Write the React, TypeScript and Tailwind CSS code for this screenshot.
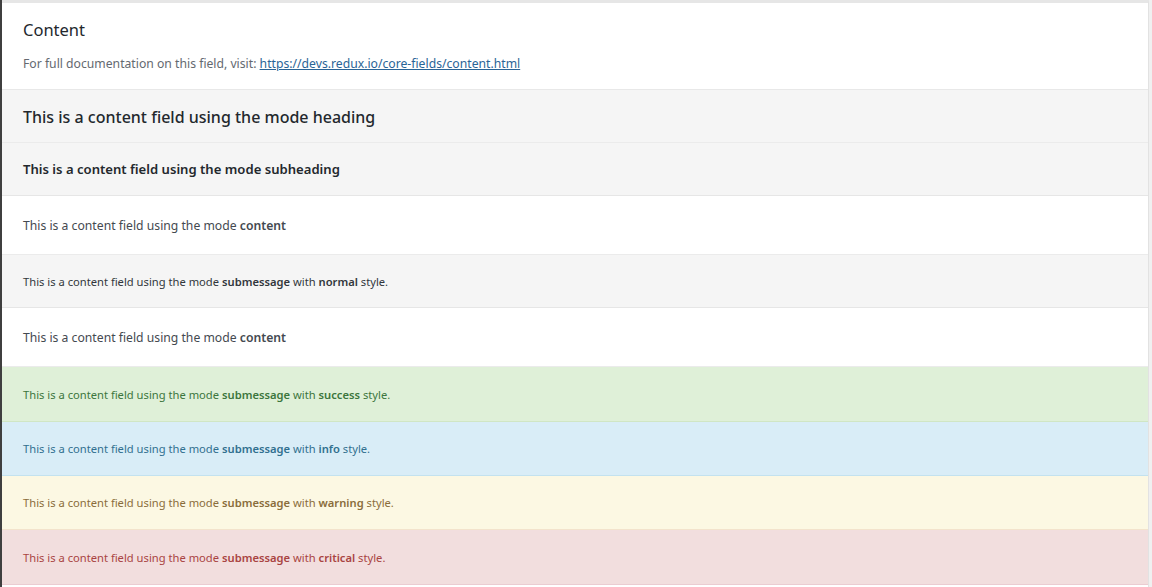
import React from "react";

const F = { fontFamily: '"Noto Sans", "Open Sans", sans-serif' };

function Row({ bg, border, h, children }: { bg: string; border: string; h: string; children: React.ReactNode }) {
  return (
    <div className={`${bg} ${border} ${h} border-b flex items-center pl-[21px] pt-[2px]`}>{children}</div>
  );
}

export default function App() {
  return (
    <div className="w-[1152px] h-[587px] bg-white flex overflow-hidden" style={F}>
      <div className="w-[2px] bg-[#3f3f3f] shrink-0" />
      <div className="flex-1 flex flex-col border-r border-[#e2e2e2] border-t-[3px] border-t-[#e6e6e6]">
        <div className="h-[87px] border-b border-[#e8e8e8] bg-white pl-[21px] pt-[15px]">
          <div className="text-[16.5px] text-[#23282d] leading-[24px]">Content</div>
          <div className="text-[12.2px] text-[#646970] mt-[13px]">
            For full documentation on this field, visit:{" "}
            <a className="text-[#2a6496] underline" href="#">https://devs.redux.io/core-fields/content.html</a>
          </div>
        </div>
        <Row bg="bg-[#f5f5f5]" border="border-[#ebebeb]" h="h-[53px]">
          <span className="text-[16px] font-medium text-[#23282d]">This is a content field using the mode heading</span>
        </Row>
        <Row bg="bg-[#f5f5f5]" border="border-[#e6e6e6]" h="h-[53px]">
          <span className="text-[13.1px] font-semibold text-[#23282d]">This is a content field using the mode subheading</span>
        </Row>
        <Row bg="bg-white" border="border-[#ebebeb]" h="h-[59px]">
          <span className="text-[12.2px] text-[#444950]">This is a content field using the mode <b className="font-semibold">content</b></span>
        </Row>
        <Row bg="bg-[#f5f5f5]" border="border-[#e6e6e6]" h="h-[53px]">
          <span className="text-[11.2px] text-[#32373c]">This is a content field using the mode <b className="font-semibold">submessage</b> with <b className="font-semibold">normal</b> style.</span>
        </Row>
        <Row bg="bg-white" border="border-[#ebebeb]" h="h-[59px]">
          <span className="text-[12.2px] text-[#444950]">This is a content field using the mode <b className="font-semibold">content</b></span>
        </Row>
        <Row bg="bg-[#dff0d8]" border="border-[#d0e6c4]" h="h-[55px]">
          <span className="text-[11.2px] text-[#3c763d]">This is a content field using the mode <b className="font-semibold">submessage</b> with <b className="font-semibold">success</b> style.</span>
        </Row>
        <Row bg="bg-[#d9edf7]" border="border-[#c3e2ef]" h="h-[54px]">
          <span className="text-[11.2px] text-[#31708f]">This is a content field using the mode <b className="font-semibold">submessage</b> with <b className="font-semibold">info</b> style.</span>
        </Row>
        <Row bg="bg-[#fcf8e3]" border="border-[#f3e3cc]" h="h-[54px]">
          <span className="text-[11.2px] text-[#8a6d3b]">This is a content field using the mode <b className="font-semibold">submessage</b> with <b className="font-semibold">warning</b> style.</span>
        </Row>
        <Row bg="bg-[#f2dede]" border="border-[#ebccd1]" h="h-[55px]">
          <span className="text-[11.2px] text-[#a94442]">This is a content field using the mode <b className="font-semibold">submessage</b> with <b className="font-semibold">critical</b> style.</span>
        </Row>
      </div>
      <div className="w-[3px] bg-[#f0f0f0] shrink-0" />
    </div>
  );
}
